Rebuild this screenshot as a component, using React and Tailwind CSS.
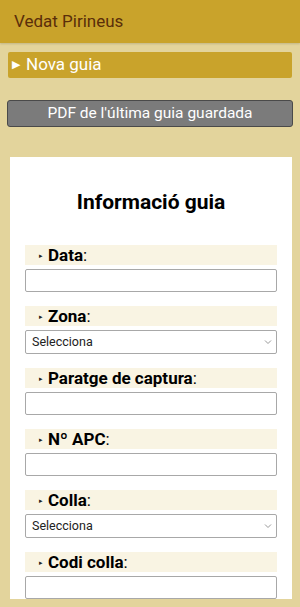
import React from 'react'

const fields = [
  { label: 'Data', type: 'input' },
  { label: 'Zona', type: 'select' },
  { label: 'Paratge de captura', type: 'input' },
  { label: 'Nº APC', type: 'input' },
  { label: 'Colla', type: 'select' },
  { label: 'Codi colla', type: 'input' },
]

const Field = ({ label, type }) => (
  <div className="mb-[14px]">
    <div className="h-[20px] bg-[#f9f4e3] flex items-center pl-[14px]">
      <span className="text-[7px] text-[#222] mr-[5px] mt-[2px]">▸</span>
      <span className="text-[17px] font-bold text-black leading-none">{label}</span>
      <span className="text-[17px] text-black leading-none">:</span>
    </div>
    {type === 'input' ? (
      <div className="mt-[4px] h-[23px] border border-[#a8a8a8] rounded-[2px] bg-white" />
    ) : (
      <div className="mt-[4px] h-[24px] border border-[#a8a8a8] rounded-[2px] bg-white flex items-center justify-between pl-[6px] pr-[4px]">
        <span className="text-[12.5px] text-[#222]">Selecciona</span>
        <svg width="8" height="6" viewBox="0 0 8 6" fill="none" stroke="#999" strokeWidth="1">
          <path d="M1 1.5 L4 4.5 L7 1.5" />
        </svg>
      </div>
    )}
  </div>
)

const App = () => {
  return (
    <div className="h-[607px] overflow-hidden bg-[#e3d49c]" style={{ fontFamily: 'Roboto, "Liberation Sans", sans-serif' }}>
      {/* Header */}
      <div className="h-[43px] bg-[#c9a32b] flex items-center pl-[14px] shadow-[0_1px_2px_rgba(0,0,0,0.15)]">
        <span className="text-[17px] text-[#5a2e0a]">Vedat Pirineus</span>
      </div>

      <div className="px-[8px] pt-[9px]">
        {/* Nova guia */}
        <div className="h-[26px] bg-[#c9a32b] rounded-[2px] flex items-center pl-[4px]">
          <span className="text-[11px] text-white mr-[6px]">▶</span>
          <span className="text-[17px] text-white">Nova guia</span>
        </div>

        {/* PDF button */}
        <div className="mt-[22px] h-[27px] bg-[#7b7b7b] border border-[#4a4a4a] rounded-[3px] flex items-center justify-center -mx-[1px]">
          <span className="text-[15.5px] text-white">PDF de l'última guia guardada</span>
        </div>
      </div>

      {/* Card */}
      <div className="mt-[30px] mx-[10px] mr-[8px] bg-white px-[15px] pt-[31px]">
        <h1 className="text-center text-[21px] font-bold text-black mb-[29px] leading-[28px]">Informació guia</h1>
        {fields.map((f, i) => (
          <Field key={i} {...f} />
        ))}
      </div>
    </div>
  )
}

export default App
